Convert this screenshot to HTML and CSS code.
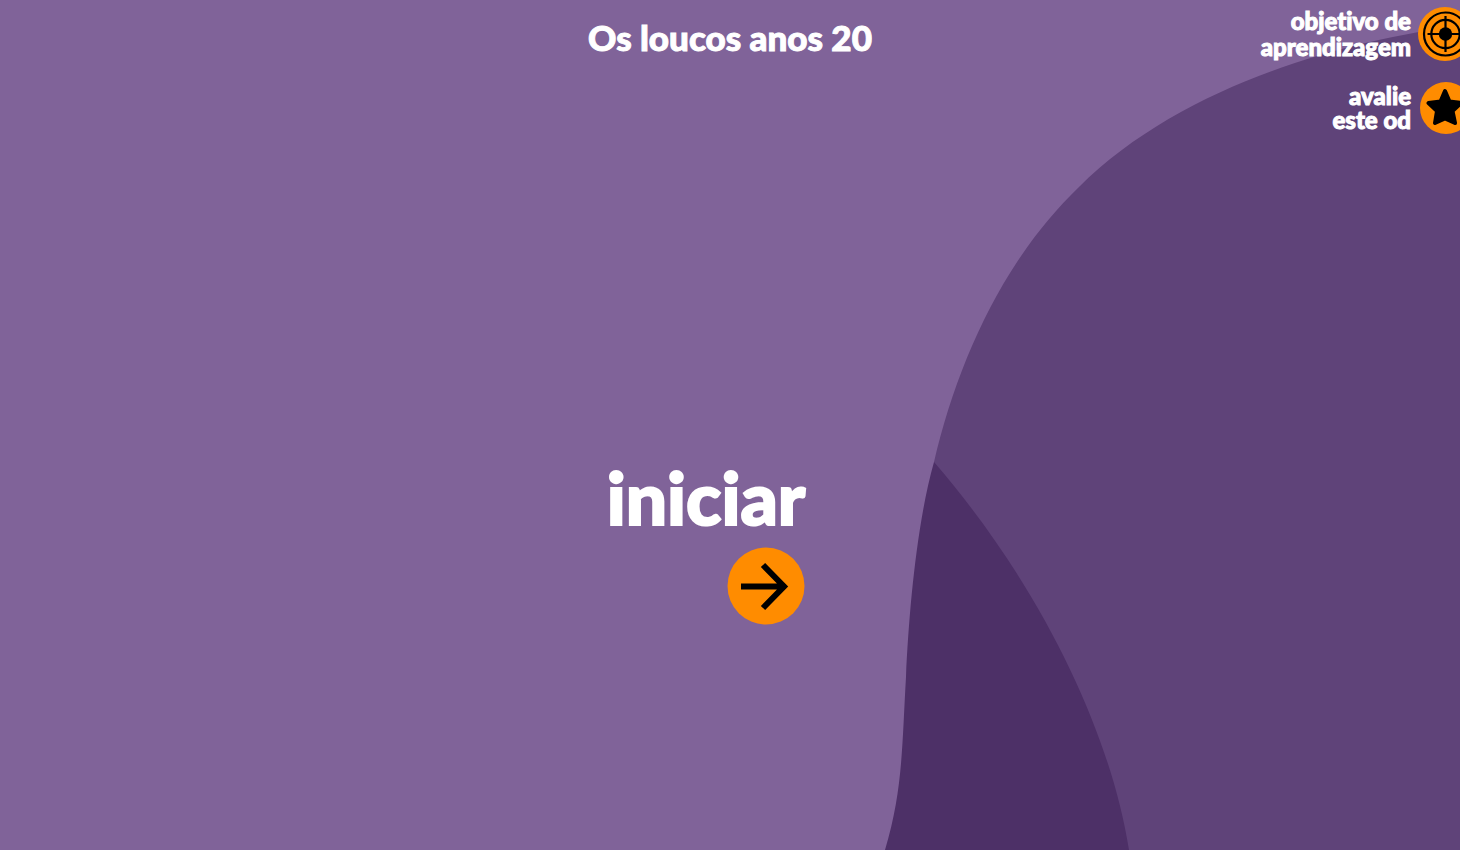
FILE: index.html
```html
<!DOCTYPE html>
<html lang="pt-BR">
<head>
<meta charset="utf-8">
<meta name="viewport" content="width=device-width, initial-scale=1">
<title>Os loucos anos 20</title>
<link rel="stylesheet" href="styles.css">
</head>
<body>
<svg class="backdrop" viewBox="0 0 1460 850" preserveAspectRatio="none" aria-hidden="true">
  <path class="hill" d="M1460 26C1345 40 1180 86 1079 187C1004 259 958 360 934 462L934 850H1460Z"/>
  <path class="valley" d="M934 462C917 522 909 610 906 677C902 745 903 790 885 850H1129C1110 730 1040 585 934 462Z"/>
</svg>
<div class="page">
  <header class="top">
    <h1 class="title">Os loucos anos 20</h1>
    <nav class="tools">
      <button class="tool" type="button">
        <span class="tool-label">objetivo de<br>aprendizagem</span>
        <svg class="tool-icon" viewBox="0 0 54 54" aria-hidden="true">
          <circle class="disc" cx="27" cy="27" r="27"/>
          <circle class="ring" cx="27.500" cy="27" r="21.5"/>
          <circle class="ring" cx="27.500" cy="27" r="14.2"/>
          <path class="ring" d="M27.500 9V45M9.500 27H45.500"/>
          <circle cx="27.500" cy="27" r="6.7"/>
        </svg>
      </button>
      <button class="tool tool-rate" type="button">
        <span class="tool-label">avalie<br>este od</span>
        <svg class="tool-icon" viewBox="0 0 54 54" aria-hidden="true">
          <circle class="disc" cx="28" cy="27" r="26"/>
          <path class="star" d="M27 10L31.5 20.5L43 22L34.500 30L37 42L27 37.500L17 42L19 30L10.500 22L22.500 20.500Z"/>
        </svg>
      </button>
    </nav>
  </header>
  <main class="stage">
    <button class="start" type="button">
      <span class="start-label">iniciar</span>
      <svg class="start-icon" viewBox="0 0 78 78" aria-hidden="true">
        <circle class="disc" cx="39" cy="39" r="38.500"/>
        <path class="arrow" d="M14 39.500H57M36 18L57 39.500L36 61"/>
      </svg>
    </button>
  </main>
</div>
</body>
</html>
```
FILE: styles.css
```css
* {
  box-sizing: border-box;
}

body {
  margin: 0;
  min-height: 100vh;
  overflow: hidden;
  background: #806399;
  color: #fff;
  font-family: Lato, "Open Sans", sans-serif;
  font-weight: 900;
  font-variant-ligatures: none;
  -webkit-text-stroke: 1px #fff;
}

button {
  padding: 0;
  border: 0;
  background: none;
  color: inherit;
  font: inherit;
  font-variant-ligatures: none;
  cursor: pointer;
}

.backdrop {
  position: absolute;
  inset: 0;
  width: 100%;
  height: 100%;
}

.hill {
  fill: #5f4379;
}

.valley {
  fill: #4d3067;
}

.page {
  position: relative;
  display: flex;
  flex-direction: column;
  min-height: 100vh;
}

.top {
  display: grid;
  grid-template-columns: 1fr auto 1fr;
  align-items: start;
}

.title {
  grid-column: 2;
  margin: 16px 0 0;
  font-size: 35px;
  font-weight: 900;
  line-height: 42px;
}

.tools {
  display: flex;
  flex-direction: column;
  align-items: flex-end;
  gap: 20px;
  margin: 7px -12px 0 0;
}

.tool {
  display: flex;
  align-items: center;
  gap: 7px;
  font-size: 24px;
  line-height: 26px;
  text-align: right;
}

.tool-rate {
  line-height: 24px;
}

.tool-icon {
  width: 54px;
  height: 54px;
}

.disc {
  fill: #ff8c00;
}

.ring {
  fill: none;
  stroke: #000;
  stroke-width: 2.2;
}

.star {
  stroke: #000;
  stroke-width: 4;
  stroke-linejoin: round;
}

.stage {
  display: flex;
  flex: 1;
  justify-content: center;
  padding-top: 320px;
}

.start {
  display: flex;
  flex-direction: column;
  align-items: flex-end;
  align-self: flex-start;
  margin-left: -48px;
  gap: 8px;
}

.start-label {
  font-size: 73px;
  line-height: 84px;
  -webkit-text-stroke-width: 2px;
}

.start-icon {
  width: 78px;
  height: 78px;
}

.arrow {
  fill: none;
  stroke: #000;
  stroke-width: 6;
}
```
